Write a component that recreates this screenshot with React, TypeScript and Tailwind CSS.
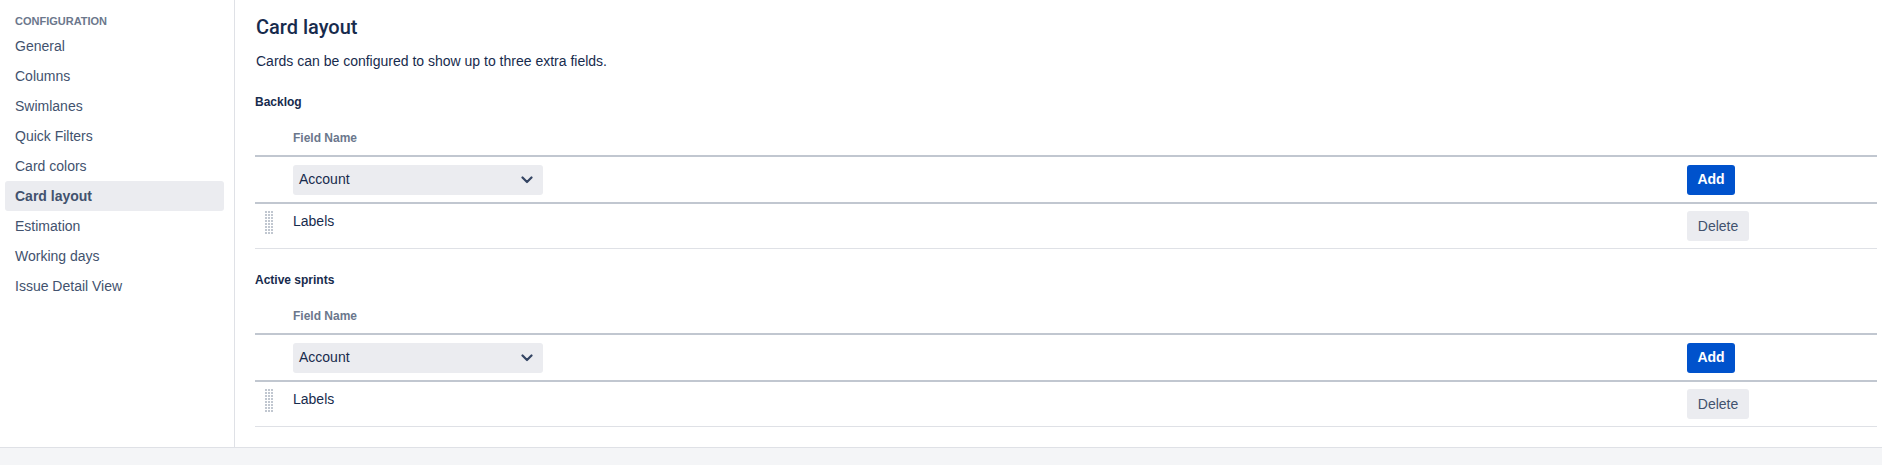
import React from 'react';

const navItems = [
  'General',
  'Columns',
  'Swimlanes',
  'Quick Filters',
  'Card colors',
  'Card layout',
  'Estimation',
  'Working days',
  'Issue Detail View',
];

const DragHandle = () => (
  <svg width="9" height="24" viewBox="0 0 9 24" className="block">
    {Array.from({ length: 8 }).map((_, r) =>
      [0, 1, 2].map((c) => (
        <rect key={`${r}-${c}`} x={c * 3} y={r * 3} width="2" height="2" fill="#c1c7d0" />
      ))
    )}
  </svg>
);

const Chevron = () => (
  <svg width="12" height="8" viewBox="0 0 12 8">
    <path d="M1.5 1.5 L6 6 L10.5 1.5" fill="none" stroke="#344563" strokeWidth="2.2" strokeLinecap="round" strokeLinejoin="round" />
  </svg>
);

const FieldTable = ({ title }: { title: string }) => (
  <div>
    <div className="text-[12px] leading-4 font-semibold text-[#172b4d]">{title}</div>
    <div className="grid grid-cols-[38px_1fr_190px] h-[47px] items-end pb-[9px] border-b-2 border-[#c1c7d0]">
      <div />
      <div className="text-[12px] leading-4 font-semibold text-[#6b778c]">Field Name</div>
      <div />
    </div>
    <div className="grid grid-cols-[38px_1fr_190px] h-[47px] items-center border-b-2 border-[#c1c7d0]">
      <div />
      <div>
        <div className="w-[250px] h-[30px] rounded-[3px] bg-[#ebecf0] flex items-center justify-between pl-[6px] pr-[10px] text-[14px] text-[#172b4d]">
          <span>Account</span>
          <Chevron />
        </div>
      </div>
      <div>
        <button className="h-[30px] w-[48px] rounded-[3px] bg-[#0052cc] text-white text-[14px] font-bold">Add</button>
      </div>
    </div>
    <div className="grid grid-cols-[38px_1fr_190px] items-start pt-[7px] pb-[7px] border-b border-[#dfe1e6]">
      <div className="pl-[10px]">
        <DragHandle />
      </div>
      <div className="text-[14px] leading-5 text-[#172b4d]">Labels</div>
      <div>
        <button className="h-[30px] w-[62px] rounded-[3px] bg-[#ebecf0] text-[#42526e] text-[14px]">Delete</button>
      </div>
    </div>
  </div>
);

export default function App() {
  return (
    <div className="w-full h-[465px] flex flex-col bg-white font-['Liberation_Sans',Arial,sans-serif]">
      <div className="flex h-[447px]">
        <aside className="w-[235px] shrink-0 border-r border-[#dfe1e6] pl-[5px] pr-[10px] pt-[13px]">
          <div className="pl-[10px] text-[11px] leading-4 font-semibold text-[#6b778c] uppercase">Configuration</div>
          <div className="mt-[2px]">
            {navItems.map((item) => (
              <div
                key={item}
                className={
                  item === 'Card layout'
                    ? 'h-[30px] flex items-center pl-[10px] rounded-[3px] bg-[#ebecf0] text-[14px] font-semibold text-[#42526e]'
                    : 'h-[30px] flex items-center pl-[10px] text-[14px] text-[#42526e]'
                }
              >
                {item}
              </div>
            ))}
          </div>
        </aside>
        <main className="flex-1 pl-[20px] pr-[5px] pt-[15px]">
          <h1 className="font-['Roboto',sans-serif] text-[20px] leading-6 font-medium text-[#172b4d] pl-px">Card layout</h1>
          <p className="mt-[12px] text-[14px] leading-5 text-[#172b4d] pl-px">
            Cards can be configured to show up to three extra fields.
          </p>
          <div className="mt-[23px]">
            <FieldTable title="Backlog" />
          </div>
          <div className="mt-[23px]">
            <FieldTable title="Active sprints" />
          </div>
        </main>
      </div>
      <div className="flex-1 bg-[#f4f5f7] border-t border-[#dfe1e6]" />
    </div>
  );
}
